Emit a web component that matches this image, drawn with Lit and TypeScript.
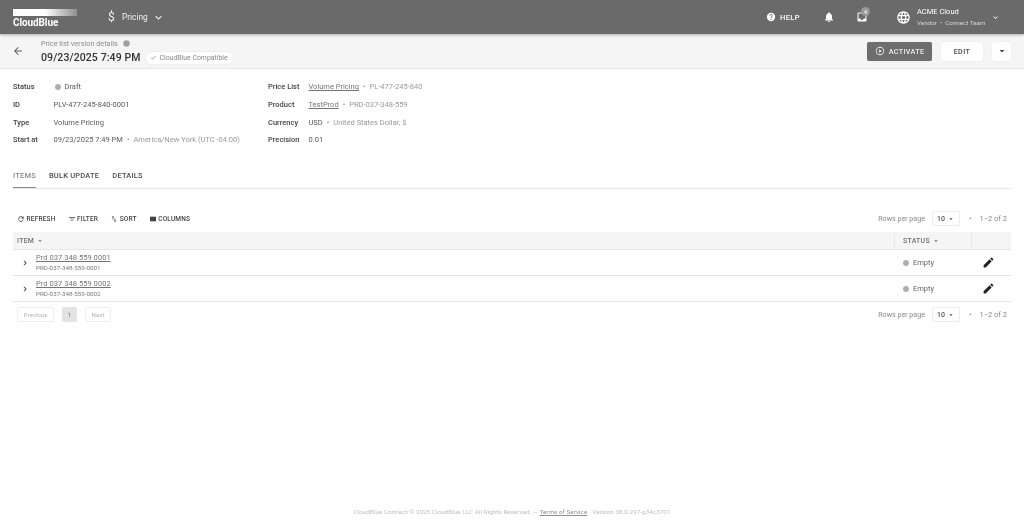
import { LitElement, html, css, svg } from "lit";
import { customElement } from "lit/decorators.js";

const ic = (size: number, d: unknown, cls = "") =>
  html`<svg class="ic ${cls}" width=${size} height=${size} viewBox="0 0 24 24" fill="currentColor">${d}</svg>`;

const pencil = svg`<path d="M3 17.25V21h3.75L17.81 9.94l-3.75-3.75L3 17.25zM20.71 7.04a1 1 0 0 0 0-1.41l-2.34-2.34a1 1 0 0 0-1.41 0l-1.83 1.83 3.75 3.75 1.83-1.83z"/>`;
const chevron = svg`<path d="M8.59 16.59 13.17 12 8.59 7.41 10 6l6 6-6 6z"/>`;
const caret = svg`<path d="M7 10l5 5 5-5z"/>`;

@customElement("app-root")
export class AppRoot extends LitElement {
  static styles = css`
    :host { display: flex; flex-direction: column; width: 1024px; height: 530px; overflow: hidden; background: #fff; font-family: Roboto, "Liberation Sans", sans-serif; font-size: 7.5px; color: #4a4a4a; filter: blur(.3px); }
    .ic { display: block; flex: none; }
    a { color: #757575; text-decoration: underline; }
    .top { height: 34px; flex: none; background: #6a6a6a; display: flex; align-items: center; color: #fff; box-shadow: 0 1px 3px rgba(0,0,0,.3); position: relative; z-index: 1; padding-left: 13px; }
    .logo { width: 64px; display: flex; flex-direction: column; font-size: 10px; font-weight: 700; letter-spacing: -.1px; line-height: 11px; margin-top: 3px; }
    .logo i { display: block; height: 7px; width: 64px; background: linear-gradient(90deg, #fff 50%, #8e8e8e 100%); margin-bottom: 1px; }
    .pricing { margin-left: 31px; display: flex; align-items: center; font-size: 8.3px; color: #f0f0f0; }
    .pricing .d { font-size: 12px; margin-right: 8px; width: 6px; }
    .pricing .ic { margin-left: 4px; }
    .spacer { flex: 1; }
    .help { display: flex; align-items: center; gap: 4px; font-size: 7.5px; font-weight: 500; letter-spacing: .4px; }
    .bell { margin-left: 23px; }
    .inbox { margin-left: 21px; position: relative; }
    .badge { position: absolute; left: 5px; top: -4px; width: 9px; height: 9px; border-radius: 50%; background: #9a9a9a; font-size: 6px; line-height: 9px; text-align: center; }
    .globe { margin-left: 28px; }
    .acct { margin-left: 6px; width: 78px; display: flex; flex-direction: column; }
    .acct b { font-weight: 400; font-size: 7.5px; line-height: 10px; }
    .acct span { font-size: 6.25px; line-height: 8px; color: #d5d5d5; margin-top: 2px; }
    .acct-c { margin-right: 24px; margin-left: -4px; }

    .head { background: #f5f5f5; border-bottom: 1px solid #e6e6e6; box-sizing: border-box; height: 35px; flex: none; display: flex; align-items: center; padding: 0 13px 0 12px; }
    .back { color: #616161; margin-right: 17px; }
    .ttl { display: flex; flex-direction: column; padding-top: 1px; }
    .ttl .sm { display: flex; align-items: center; gap: 5px; font-size: 7.3px; color: #8c8c8c; line-height: 10px; }
    .ttl .row { display: flex; align-items: center; margin-top: 2px; }
    .ttl .date { font-size: 10.5px; font-weight: 500; color: #333; line-height: 14px; letter-spacing: .1px; }
    .chip { margin-left: 4px; height: 12px; background: #fff; border: 1px solid #ededed; border-radius: 7px; display: flex; align-items: center; gap: 3px; padding: 0 5px 0 4px; font-size: 6.9px; color: #8a8a8a; }
    .btn { height: 19px; box-sizing: border-box; display: flex; align-items: center; justify-content: center; border-radius: 2px; font-size: 7.2px; font-weight: 500; letter-spacing: .4px; background: #fff; color: #4a4a4a; box-shadow: 0 0 1px rgba(0,0,0,.18); }
    .activate { width: 65px; background: #6e6e6e; color: #ececec; gap: 4px; letter-spacing: .35px; }
    .edit { width: 42px; margin-left: 9px; }
    .more { width: 19px; margin-left: 9px; }

    .info { display: flex; padding: 9px 13px 0; }
    .col { display: grid; grid-auto-rows: 17.67px; align-items: center; }
    .c1 { grid-template-columns: 40.5px 1fr; width: 255px; }
    .c2 { grid-template-columns: 40.5px 1fr; }
    .k { font-weight: 500; color: #444; font-size: 7.5px; }
    .v { color: #5a5a5a; display: flex; align-items: center; font-size: 7.5px; }
    .mut { color: #9a9a9a; }
    .sep { margin: 0 4px; color: #888; }
    .dot { width: 6px; height: 6px; border-radius: 50%; background: #b0b0b0; margin: 0 4px 0 1px; flex: none; }

    .tabs { margin: 13.5px 13px 0; display: flex; gap: 13px; border-bottom: 1px solid #e8e8e8; height: 27px; box-sizing: border-box; }
    .tab { font-size: 7.5px; font-weight: 500; letter-spacing: .2px; color: #4c4c4c; display: flex; align-items: center; position: relative; height: 26px; margin-bottom: -1px; }
    .tab.on { color: #8c8c8c; }
    .tab.on::after { content: ""; position: absolute; left: 0; right: 0; bottom: 0; height: 1.5px; background: #8a8a8a; }

    .tools { margin: 18px 13px 0; height: 25px; padding: 0 4px 2px; box-sizing: border-box; display: flex; align-items: center; }
    .tool { display: flex; align-items: center; font-size: 6.5px; font-weight: 500; letter-spacing: .2px; color: #444; gap: 1.5px; margin-right: 12px; }
    .pager { margin-left: auto; display: flex; align-items: center; font-size: 7.5px; color: #8a8a8a; }
    .rpp { font-size: 7.1px; }
    .sel { margin-left: 7px; width: 28px; height: 15px; box-sizing: border-box; border: 1px solid #ececec; border-radius: 2px; display: flex; align-items: center; justify-content: center; gap: 2px; color: #555; font-weight: 500; font-size: 7px; }
    .pdot { margin: 0 8px 0 9px; }

    .table { margin: 0 13px; }
    .tr { display: grid; grid-template-columns: 881px 77px 40px; }
    .th { height: 18px; background: #f5f5f5; border-bottom: 1px solid #e6e6e6; box-sizing: border-box; }
    .th > div { display: flex; align-items: center; font-size: 6.9px; letter-spacing: .3px; color: #707070; padding-left: 4px; font-weight: 500; }
    .th > div + div { border-left: 1px solid #e9e9e9; margin: 1px 0; padding-left: 8px; }
    .rw { height: 26px; border-bottom: 1px solid #e6e6e6; box-sizing: border-box; }
    .rw > div { display: flex; align-items: center; }
    .cell1 { padding-left: 7px; color: #333; }
    .names { margin-left: 6px; display: flex; flex-direction: column; }
    .names a { font-size: 7.5px; line-height: 10px; letter-spacing: .05px; }
    .names span { font-size: 6.25px; line-height: 8px; margin-top: 1px; color: #7a7a7a; }
    .cell2 { padding-left: 9px; font-size: 7.5px; color: #666; }
    .cell2 .dot { margin: 0 4px 0 0; }
    .cell3 { color: #222; padding-left: 11px; }

    .foot { margin: 0 13px; height: 25px; display: flex; align-items: center; padding: 0 4px; }
    .pg { height: 15px; box-sizing: border-box; display: flex; align-items: center; justify-content: center; font-size: 6.25px; color: #b5b5b5; border: 1px solid #eeeeee; border-radius: 2px; }
    .prev { width: 37px; }
    .cur { width: 15px; margin-left: 8px; background: #e3e3e3; border: none; color: #777; }
    .next { width: 26px; margin-left: 8px; }

    .grow { flex: 1; }
    .copy { flex: none; height: 22px; box-sizing: border-box; text-align: center; font-size: 6.25px; color: #bdbdbd; letter-spacing: .07px; }
    .copy a { color: #8f8f8f; }
  `;

  private pager() {
    return html`<div class="pager">
      <span class="rpp">Rows per page</span>
      <div class="sel">10 ${ic(8, caret)}</div>
      <span class="pdot">•</span>
      1−2 of 2
    </div>`;
  }

  private row(name: string, id: string) {
    return html`<div class="tr rw">
      <div class="cell1">${ic(10, chevron)}<div class="names"><a>${name}</a><span>${id}</span></div></div>
      <div class="cell2"><i class="dot"></i>Empty</div>
      <div class="cell3">${ic(13, pencil)}</div>
    </div>`;
  }

  render() {
    return html`
      <div class="top">
        <div class="logo"><i></i>CloudBlue</div>
        <div class="pricing"><span class="d">$</span>Pricing${ic(13, svg`<path d="M7.41 8.59 12 13.17l4.59-4.58L18 10l-6 6-6-6z"/>`)}</div>
        <div class="spacer"></div>
        <div class="help">${ic(10, svg`<path d="M12 2a10 10 0 1 0 0 20 10 10 0 0 0 0-20zm1 17h-2v-2h2v2zm2.07-7.75-.9.92C13.45 12.9 13 13.5 13 15h-2v-.5c0-1.1.45-2.1 1.17-2.83l1.24-1.26A2 2 0 1 0 10 9H8a4 4 0 1 1 8 0c0 .88-.36 1.68-.93 2.25z"/>`)}HELP</div>
        <div class="bell">${ic(12, svg`<path d="M12 22a2 2 0 0 0 2-2h-4a2 2 0 0 0 2 2zm6-6v-5c0-3.07-1.63-5.64-4.5-6.32V4a1.5 1.5 0 0 0-3 0v.68C7.64 5.36 6 7.92 6 11v5l-2 2v1h16v-1l-2-2z"/>`)}</div>
        <div class="inbox">${ic(12, svg`<path d="M19 3H5a2 2 0 0 0-2 2v14a2 2 0 0 0 2 2h14a2 2 0 0 0 2-2V5a2 2 0 0 0-2-2zm0 12h-4a3 3 0 0 1-6 0H5V5h14v10z"/>`)}<span class="badge">4</span></div>
        <div class="globe">${ic(15, svg`<path d="M11.99 2C6.47 2 2 6.48 2 12s4.47 10 9.99 10C17.52 22 22 17.52 22 12S17.52 2 11.99 2zm6.93 6h-2.95a15.65 15.65 0 0 0-1.38-3.56A8.03 8.03 0 0 1 18.92 8zM12 4.04c.83 1.2 1.48 2.53 1.91 3.96h-3.82c.43-1.43 1.08-2.76 1.91-3.96zM4.26 14C4.1 13.36 4 12.69 4 12s.1-1.36.26-2h3.38c-.08.66-.14 1.32-.14 2s.06 1.34.14 2H4.26zm.82 2h2.95c.32 1.25.78 2.45 1.38 3.56A7.99 7.99 0 0 1 5.08 16zm2.95-8H5.08a7.99 7.99 0 0 1 4.33-3.56A15.65 15.65 0 0 0 8.03 8zM12 19.96c-.83-1.2-1.48-2.53-1.91-3.96h3.82c-.43 1.43-1.08 2.76-1.91 3.96zM14.34 14H9.66c-.09-.66-.16-1.32-.16-2s.07-1.35.16-2h4.68c.09.65.16 1.32.16 2s-.07 1.34-.16 2zm.25 5.56c.6-1.11 1.06-2.31 1.38-3.56h2.95a8.03 8.03 0 0 1-4.33 3.56zM16.36 14c.08-.66.14-1.32.14-2s-.06-1.34-.14-2h3.38c.16.64.26 1.31.26 2s-.1 1.36-.26 2h-3.38z"/>`)}</div>
        <div class="acct"><b>ACME Cloud</b><span>Vendor &nbsp;•&nbsp; Connect Team</span></div>
        <div class="acct-c">${ic(9, svg`<path d="M7.41 8.59 12 13.17l4.59-4.58L18 10l-6 6-6-6z"/>`)}</div>
      </div>

      <div class="head">
        <div class="back">${ic(12, svg`<path d="M20 11H7.83l5.59-5.59L12 4l-8 8 8 8 1.41-1.41L7.83 13H20v-2z"/>`)}</div>
        <div class="ttl">
          <div class="sm">Price list version details <svg class="ic" width="7" height="7" viewBox="0 0 24 24" fill="#a0a0a0"><circle cx="12" cy="12" r="11"/></svg></div>
          <div class="row"><span class="date">09/23/2025 7:49 PM</span>
            <span class="chip">${ic(7, svg`<path d="M9 16.17 4.83 12l-1.42 1.41L9 19 21 7l-1.41-1.41z"/>`)}CloudBlue Compatible</span>
          </div>
        </div>
        <div class="spacer"></div>
        <div class="btn activate">${ic(10, svg`<path d="m10 16.5 6-4.5-6-4.5v9zM12 2a10 10 0 1 0 0 20 10 10 0 0 0 0-20zm0 18a8 8 0 1 1 0-16 8 8 0 0 1 0 16z"/>`)}ACTIVATE</div>
        <div class="btn edit">EDIT</div>
        <div class="btn more">${ic(12, caret)}</div>
      </div>

      <div class="info">
        <div class="col c1">
          <div class="k">Status</div><div class="v"><i class="dot"></i>Draft</div>
          <div class="k">ID</div><div class="v">PLV-477-245-840-0001</div>
          <div class="k">Type</div><div class="v">Volume Pricing</div>
          <div class="k">Start at</div><div class="v">09/23/2025 7:49 PM<span class="sep">•</span><span class="mut">America/New York (UTC -04:00)</span></div>
        </div>
        <div class="col c2">
          <div class="k">Price List</div><div class="v"><a>Volume Pricing</a><span class="sep">•</span><span class="mut">PL-477-245-840</span></div>
          <div class="k">Product</div><div class="v"><a>TestProd</a><span class="sep">•</span><span class="mut">PRD-037-348-559</span></div>
          <div class="k">Currency</div><div class="v">USD<span class="sep">•</span><span class="mut">United States Dollar, $</span></div>
          <div class="k">Precision</div><div class="v">0.01</div>
        </div>
      </div>

      <div class="tabs">
        <div class="tab on">ITEMS</div><div class="tab">BULK UPDATE</div><div class="tab">DETAILS</div>
      </div>

      <div class="tools">
        <div class="tool">${ic(8, svg`<path d="M17.65 6.35A8 8 0 1 0 19.73 14h-2.08A6 6 0 1 1 12 6c1.66 0 3.14.69 4.22 1.78L13 11h7V4l-2.35 2.35z"/>`)}REFRESH</div>
        <div class="tool">${ic(8, svg`<path d="M10 18h4v-2h-4v2zM3 6v2h18V6H3zm3 7h12v-2H6v2z"/>`)}FILTER</div>
        <div class="tool">${ic(8, svg`<path d="M16 17.01V10h-2v7.01h-3L15 21l4-3.99h-3zM9 3 5 6.99h3V14h2V6.99h3L9 3z"/>`)}SORT</div>
        <div class="tool">${ic(8, svg`<path d="M3 5h18v14H3z"/>`)}COLUMNS</div>
        ${this.pager()}
      </div>

      <div class="table">
        <div class="tr th">
          <div>ITEM&nbsp;${ic(8, caret)}</div>
          <div>STATUS&nbsp;${ic(8, caret)}</div>
          <div></div>
        </div>
        ${this.row("Prd 037 348 559 0001", "PRD-037-348-559-0001")}
        ${this.row("Prd 037 348 559 0002", "PRD-037-348-559-0002")}
      </div>

      <div class="foot">
        <div class="pg prev">Previous</div><div class="pg cur">1</div><div class="pg next">Next</div>
        ${this.pager()}
      </div>

      <div class="grow"></div>
      <div class="copy">CloudBlue Connect © 2025 CloudBlue LLC All Rights Reserved. — <a>Terms of Service</a> · Version 38.0.297-g34c3701</div>
    `;
  }
}
